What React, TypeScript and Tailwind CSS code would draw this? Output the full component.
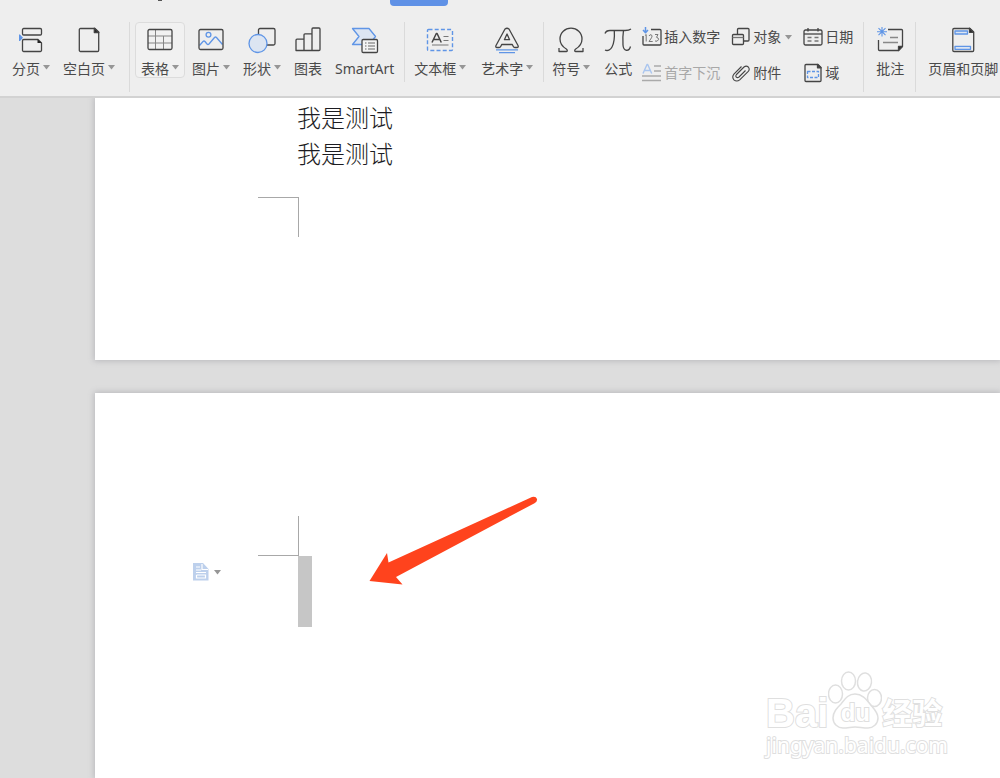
import type { ReactNode } from "react";

const DARK = "#444444";
const BLUE = "#5f95e6";
const PALE = "#dce5f2";

function Caret({ raised }: { raised?: boolean }) {
  return (
    <svg width="7" height="5" viewBox="0 0 7 5" aria-hidden="true" className={raised ? "mb-1" : ""}>
      <path d="M0 0h7L3.5 4.6z" fill="#969696" />
    </svg>
  );
}

function Icon({ children, size = 28 }: { children: ReactNode; size?: number }) {
  return (
    <svg
      width={size}
      height={size}
      viewBox={`0 0 ${size} ${size}`}
      fill="none"
      stroke={DARK}
      strokeWidth="1.3"
      strokeLinejoin="round"
      aria-hidden="true"
      className="shrink-0"
    >
      {children}
    </svg>
  );
}

const icons = {
  pageBreak: (
    <Icon>
      <rect x="5.5" y="2.5" width="19" height="6.5" rx="1.2" />
      <path d="M21 13.5H6.700a1.200 1.200 0 0 0-1.200 1.200v9.600a1.200 1.200 0 0 0 1.200 1.200h16.600a1.200 1.200 0 0 0 1.200-1.200V17z" />
      <path d="M20.500 13.300v3.700h4.200z" fill="#222" stroke="none" />
      <path d="M2 8.500h1l3 3.200L3 15H2z" fill={BLUE} stroke="none" />
    </Icon>
  ),
  blankPage: (
    <Icon>
      <path d="M20 2.500H5.500a1.200 1.200 0 0 0-1.200 1.200v20.600a1.200 1.200 0 0 0 1.200 1.200h17a1.200 1.200 0 0 0 1.200-1.200V6z" />
      <path d="M19.300 2.300v4.200h4.500z" fill="#222" />
    </Icon>
  ),
  table: (
    <Icon>
      <path d="M2 10h24M2 17h24M9.500 4v19.500M17.500 10v13" stroke="#858585" strokeWidth="1" />
      <rect x="2" y="3.500" width="24" height="20" rx="1.500" />
    </Icon>
  ),
  picture: (
    <Icon>
      <circle cx="11.500" cy="8.800" r="2.400" stroke={BLUE} />
      <path d="M2.500 19.500l3.500-4q1-1 2 0l2 2.500q1 1 2 0l5.500-6.500q1-1 2 0l6 7" stroke={BLUE} />
      <rect x="2" y="3.500" width="24" height="20" rx="1.500" />
    </Icon>
  ),
  shapes: (
    <Icon>
      <rect x="10.500" y="2.500" width="16.500" height="16.500" rx="1.500" />
      <circle cx="10" cy="17.500" r="9" fill={PALE} stroke={BLUE} />
    </Icon>
  ),
  chart: (
    <Icon>
      <path d="M2 24.500V14.200q0-1 1-1h7V8.800q0-1 1-1h7V3q0-1 1-1h6q1 0 1 1v20.500q0 1-1 1zM10 13v11M18 8v16" />
    </Icon>
  ),
  smartArt: (
    <Icon>
      <path d="M1.500 2.500H18l6.500 8-6.500 8H1.500l6.500-8z" fill={PALE} stroke={BLUE} />
      <rect x="11" y="13.500" width="15.500" height="13" rx="1.200" fill="#f4f4f4" />
      <path d="M14 17h1.500M14 20h1.500M14 23h1.500M17 17h7M17 20h7M17 23h7" stroke="#666" strokeWidth="1" />
    </Icon>
  ),
  textBox: (
    <Icon>
      <rect x="1.500" y="3.500" width="25" height="21" rx="1" stroke={BLUE} strokeWidth="1.400" strokeDasharray="4 2.200" />
      <path d="M6 16.500L10.300 7.500h.8L15.300 16.500M7.500 13.500h6.300" strokeWidth="1.500" />
      <path d="M17.500 10.500h5M17.500 14.500h5M6 19h16.500" stroke="#777" strokeWidth="1" />
    </Icon>
  ),
  wordArt: (
    <Icon>
      <path d="M12 3q2-1.500 4 0L25 19.500q.8 2-1 2h-2.200q-1 0-1.500-1l-1-2H8.700l-1 2q-.5 1-1.500 1H4q-1.800 0-1-2z" />
      <path d="M14 8l-2.600 5.700h5.200z" />
      <path d="M3 23.800h22M6 26.600h16" stroke={BLUE} />
    </Icon>
  ),
  symbol: (
    <Icon>
      <path d="M2 22v3.500h7.500q.8 0 .8-.8 0-1-1-1.700C4.800 20.300 3 17 3 13 3 6.700 8 2.200 14 2.200S25 6.700 25 13c0 4-1.800 7.300-6.300 10-1 .7-1 .7-1 1.700 0 .8 0 .8.800.8H26V22" />
    </Icon>
  ),
  formula: (
    <Icon>
      <path d="M1 7.500Q2 4.500 6 4.500h15q4 0 6-1.500M10.300 4.500c.4 7 .2 12-2.300 16.500-1.500 3-4.500 4.300-7 3M19.500 4.500c-.8 5-.8 10-.5 14.500.4 6.500 6 7 7.500 1.500" />
    </Icon>
  ),
  comment: (
    <Icon>
      <path d="M12 3.500h13.500q1 0 1 1V20l-4 4.500H3.500q-1 0-1-1V14" />
      <path d="M26.500 20.500h-4v4z" fill="#222" />
      <path d="M14 11.500h8M7 16.500h15" stroke="#888" />
      <path d="M6 1v9.500M1 5.700h10M2.500 2.200l7 7M9.500 2.200l-7 7" stroke={BLUE} strokeWidth="1.100" />
    </Icon>
  ),
  headerFooter: (
    <Icon>
      <path d="M21 2.500H5q-1.200 0-1.200 1.200v20.600q0 1.200 1.200 1.200h18.500q1.200 0 1.200-1.200V6z" />
      <path d="M20.500 2.300v4h4z" fill="#222" />
      <path d="M6 5h12.500v3H6zM6 20.300h15.500v3H6z" fill={PALE} stroke={BLUE} />
    </Icon>
  ),
  number: (
    <Icon size={20}>
      <path d="M9 2.500h9q1 0 1 1V17q0 1-1 1H2q-1 0-1-1V9" />
      <path d="M3 8.500l1.200-1V14.500M7 9q.8-1.700 2.300-1.200 1.500 1 .2 3L7 14.500h3.700M13 7.500h3l-1.500 2.800q2.200.2 2 2.400Q15.400 15 13 14" stroke="#777" strokeWidth="1" />
      <path d="M3.500 0v5.500M1 3l2.500 2.700L6 3" stroke={BLUE} strokeWidth="1.500" />
    </Icon>
  ),
  dropCap: (
    <Icon size={20}>
      <path d="M1 10.500L5 1.500h.7l4 9M2.500 7.500h6" stroke="#a9c5ef" strokeWidth="1.400" />
      <path d="M12 3h7M12 8h7M0 13h19M0 17.500h19" stroke="#aaa" />
    </Icon>
  ),
  object: (
    <Icon size={20}>
      <path d="M6.500 7V2.500q0-1 1-1h9.500q1 0 1 1V13q0 1-1 1H13" />
      <rect x="1.500" y="7.500" width="11" height="10" rx="1" />
      <path d="M1.500 10.500h11" stroke="#777" />
    </Icon>
  ),
  attachment: (
    <Icon size={20}>
      <path
        d="M14.500 7.500L8 14q-1.500 1.200-2.700.2-1-1.400.2-2.700L13 4q2.300-1.800 4.300 0 1.800 2.200 0 4.300l-8.600 8.600q-3 2.300-5.800 0-2.300-2.800 0-5.800l7.600-7.600"
        strokeWidth="1.100"
      />
    </Icon>
  ),
  date: (
    <Icon size={20}>
      <rect x="1" y="3" width="18" height="15" rx="1.500" />
      <path d="M1 7h18" />
      <path d="M5 1v3.500M15 1v3.500" />
      <path d="M4.500 10.500H8.500M11.500 10.500h4M4.500 14h4M11.500 14h4" stroke="#777" />
    </Icon>
  ),
  field: (
    <Icon size={20}>
      <path d="M15 1.500H3q-1 0-1 1v15q0 1 1 1h14q1 0 1-1V4.500z" />
      <path d="M14.500 1.500v3.300H18z" fill="#222" />
      <rect x="4.500" y="8.500" width="11" height="6" stroke={BLUE} strokeDasharray="3 1.500" />
    </Icon>
  ),
};

function Tool({ icon, label, menu, active }: { icon: ReactNode; label: string; menu?: boolean; active?: boolean }) {
  return (
    <button
      type="button"
      className={`flex h-14 shrink-0 flex-col items-center gap-[5px] rounded border px-[5px] pt-[3px] whitespace-nowrap ${
        active ? "border-[#dcdcdc] bg-[#f1f1f1]" : "border-transparent"
      }`}
    >
      {icon}
      <span className="flex items-center gap-[3px] leading-5">
        {label}
        {menu && <Caret raised />}
      </span>
    </button>
  );
}

function SmallTool({ icon, label, menu, disabled }: { icon: ReactNode; label: string; menu?: boolean; disabled?: boolean }) {
  return (
    <button
      type="button"
      disabled={disabled}
      className="flex h-5 shrink-0 items-center gap-0.5 leading-5 whitespace-nowrap disabled:text-[#a8a8a8]"
    >
      {icon}
      <span className="flex items-center gap-1">
        {label}
        {menu && <Caret />}
      </span>
    </button>
  );
}

function Divider({ tall }: { tall?: boolean }) {
  return <div className={`w-px shrink-0 bg-[#dadada] ${tall ? "h-[70px]" : "h-[60px]"}`} />;
}

function Watermark() {
  return (
    <div className="absolute right-[52px] bottom-[21px] flex flex-col text-white select-none [-webkit-text-stroke:2px_#dfdfdf] [paint-order:stroke_fill]">
      <div className="flex items-end leading-10 font-bold">
        <span className="font-['Liberation_Sans'] text-[40px]">Bai</span>
        <div className="relative mb-1 h-[60px] w-[54px]">
          <svg
            viewBox="0 0 54 60"
            className="absolute inset-0 [paint-order:normal]"
            fill="white"
            stroke="#dfdfdf"
            strokeWidth="1.500"
            aria-hidden="true"
          >
            <ellipse cx="7.500" cy="25" rx="7" ry="9" />
            <ellipse cx="20.500" cy="12" rx="7" ry="9" />
            <ellipse cx="36.500" cy="13" rx="7" ry="9" transform="rotate(8 36.500 13)" />
            <ellipse cx="46.500" cy="29" rx="7" ry="8.500" />
            <path d="M27 25c-7 0-10 5-14 10-4 4-8 8-8 14 0 6 5 10 10 10 5 0 8-1 12-1s8 1 13 1c5 0 10-4 10-10 0-6-5-10-8-14-4-5-8-10-15-10z" />
          </svg>
          <span className="absolute inset-x-0 bottom-1.5 text-center font-['Liberation_Sans'] text-2xl leading-5">du</span>
        </div>
        <span className="text-[30px]">经验</span>
      </div>
      <span className="font-['Noto_Sans'] text-[21px] leading-6">jingyan.baidu.com</span>
    </div>
  );
}

export default function App() {
  return (
    <div className="flex min-h-screen flex-col overflow-hidden bg-[#dddddd] font-['Noto_Sans','Noto_Sans_CJK_SC',sans-serif] text-sm text-[#4a4a4a]">
      <header className="relative z-10 shrink-0 border-b-2 border-[#d2d2d2] bg-[#eeeeee]">
        <div className="flex h-[22px] items-start pl-[158px]">
          <div className="h-px w-1 bg-[#555555]" />
          <div className="ml-[228px] h-[6px] w-[58px] rounded-b bg-[#5f91e6]" />
        </div>
        <div className="flex h-[74px] items-start overflow-hidden" role="toolbar" aria-label="插入">
          <div className="flex gap-px pr-2 pl-[6px]">
            <Tool icon={icons.pageBreak} label="分页" menu />
            <Tool icon={icons.blankPage} label="空白页" menu />
          </div>
          <Divider tall />
          <div className="flex gap-px pr-1 pl-[5px]">
            <Tool icon={icons.table} label="表格" menu active />
            <Tool icon={icons.picture} label="图片" menu />
            <Tool icon={icons.shapes} label="形状" menu />
            <Tool icon={icons.chart} label="图表" />
            <Tool icon={icons.smartArt} label="SmartArt" />
          </div>
          <Divider />
          <div className="flex gap-[3px] pr-1 pl-[3px]">
            <Tool icon={icons.textBox} label="文本框" menu />
            <Tool icon={icons.wordArt} label="艺术字" menu />
          </div>
          <Divider />
          <div className="flex gap-0.5 pr-1 pl-0.5">
            <Tool icon={icons.symbol} label="符号" menu />
            <Tool icon={icons.formula} label="公式" />
          </div>
          <div className="grid grid-cols-[repeat(3,auto)] gap-x-[11px] gap-y-4 pt-[5px] pr-2.5">
            <SmallTool icon={icons.number} label="插入数字" />
            <SmallTool icon={icons.object} label="对象" menu />
            <SmallTool icon={icons.date} label="日期" />
            <SmallTool icon={icons.dropCap} label="首字下沉" disabled />
            <SmallTool icon={icons.attachment} label="附件" />
            <SmallTool icon={icons.field} label="域" />
          </div>
          <Divider tall />
          <div className="pr-[5px] pl-1.5">
            <Tool icon={icons.comment} label="批注" />
          </div>
          <Divider tall />
          <div className="pl-1.5">
            <Tool icon={icons.headerFooter} label="页眉和页脚" />
          </div>
        </div>
      </header>

      <main className="flex flex-1 flex-col gap-[33px] pl-[95px]">
        <section className="h-[262px] shrink-0 bg-white pl-[163px] shadow-[0_0_6px_1px_#b8b8bc]">
          <div className="pt-0.5 pl-[39px] text-2xl leading-9 font-light text-[#1c1c22]">
            <p>我是测试</p>
            <p>我是测试</p>
          </div>
          <div className="mt-[25px] h-10 w-[41px] border-t border-r border-[#a8a8a8]" />
        </section>

        <section className="relative flex flex-1 items-start bg-white pt-[123px] pl-[98px] shadow-[0_0_6px_1px_#b8b8bc]">
          <button type="button" aria-label="粘贴选项" className="mt-[47px] flex w-[65px] items-center gap-[5px]">
            <svg width="16" height="18" viewBox="0 0 16 18" aria-hidden="true">
              <path d="M0 0h10l5.500 6v11.500H0z" fill="#bdd0ec" />
              <path d="M9 1v5.500h6M3 4h4M3 7h5M3 9.500h10M3.500 12v3h9V12h-9" stroke="white" strokeWidth="1.200" fill="none" />
            </svg>
            <Caret />
          </button>
          <div className="h-10 w-[41px] border-r border-b border-[#a8a8a8]" />
          <div className="mt-10 -ml-px h-[71px] w-[14px] bg-[#c6c6c6]" />
          <svg width="170" height="90" viewBox="0 0 170 90" className="absolute top-[102px] left-[273px]" aria-hidden="true">
            <path d="M1.500 86L19 58l1.500 9.500L164 2q4-1 5 2 .5 2.500-2.500 4.200L28 82l6.500 7.500z" fill="#ff431d" />
          </svg>
          <Watermark />
        </section>
      </main>
    </div>
  );
}
